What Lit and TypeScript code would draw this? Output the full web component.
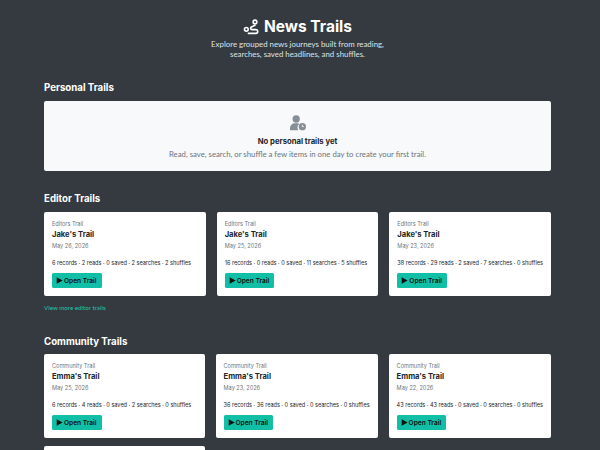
import { LitElement, css, html } from "lit";
import { customElement } from "lit/decorators.js";

const editorTrails = [
  { date: "May 26, 2026", stats: "6 records · 2 reads · 0 saved · 2 searches · 2 shuffles" },
  { date: "May 25, 2026", stats: "16 records · 0 reads · 0 saved · 11 searches · 5 shuffles" },
  { date: "May 23, 2026", stats: "38 records · 29 reads · 2 saved · 7 searches · 0 shuffles" },
];

const communityTrails = [
  { date: "May 25, 2026", stats: "6 records · 4 reads · 0 saved · 2 searches · 0 shuffles" },
  { date: "May 23, 2026", stats: "36 records · 36 reads · 0 saved · 0 searches · 0 shuffles" },
  { date: "May 22, 2026", stats: "43 records · 43 reads · 0 saved · 0 searches · 0 shuffles" },
  { date: "May 21, 2026", stats: "12 records · 12 reads · 0 saved · 0 searches · 0 shuffles" },
];

@customElement("app-root")
export class AppRoot extends LitElement {
  renderCard(kind: string, name: string, t: { date: string; stats: string }) {
    return html`
      <div class="card">
        <div class="kind">${kind}</div>
        <div class="name">${name}</div>
        <div class="date">${t.date}</div>
        <div class="stats">${t.stats}</div>
        <a class="open">
          <svg viewBox="0 0 10 10" width="7" height="7"><path d="M1 0.5 L9.5 5 L1 9.5 Z" fill="#111"></path></svg>
          Open Trail
        </a>
      </div>
    `;
  }

  render() {
    return html`
      <div class="page">
        <header>
          <h1>
            <svg viewBox="0 0 24 24" width="16" height="16" fill="none" stroke="#fff" stroke-width="2.4" stroke-linecap="round" stroke-linejoin="round">
              <circle cx="5" cy="15.5" r="2.8"></circle>
              <circle cx="18" cy="4.5" r="2.8"></circle>
              <path d="M18 9.5 L12.5 12 a2.2 2.2 0 0 0 0.8 4 h6 a2.4 2.4 0 0 1 0 5.5 H8"></path>
            </svg>
            News Trails
          </h1>
          <p>Explore grouped news journeys built from reading,<br />searches, saved headlines, and shuffles.</p>
        </header>

        <h2>Personal Trails</h2>
        <div class="empty">
          <svg viewBox="0 0 24 22" width="18" height="16">
            <circle cx="9.5" cy="5.5" r="5" fill="#868e96"></circle>
            <path d="M1 21 v-3 a6.5 6.5 0 0 1 6.5 -6.5 h4.5 a6 6 0 0 1 2 0.4 a6.5 6.5 0 0 0 -1.5 9.1 Z" fill="#868e96"></path>
            <circle cx="18" cy="16" r="5" fill="#868e96"></circle>
            <path d="M18 13.5 V16 H20" stroke="#f8f9fa" stroke-width="1.2" fill="none"></path>
          </svg>
          <div class="empty-title">No personal trails yet</div>
          <div class="empty-text">Read, save, search, or shuffle a few items in one day to create your first trail.</div>
        </div>

        <h2>Editor Trails</h2>
        <div class="grid">
          ${editorTrails.map((t) => this.renderCard("Editors Trail", "Jake's Trail", t))}
        </div>
        <a class="more">View more editor trails</a>

        <h2 class="community">Community Trails</h2>
        <div class="grid">
          ${communityTrails.map((t) => this.renderCard("Community Trail", "Emma's Trail", t))}
        </div>
      </div>
    `;
  }

  static styles = css`
    :host {
      display: block;
      background: #343a40;
      font-family: "Lato", sans-serif;
    }
    .page {
      padding: 16px 49px 24px 44px;
    }
    header {
      padding-bottom: 1px;
      text-align: center;
      color: #dee2e6;
    }
    h1 {
      margin: 0;
      display: flex;
      justify-content: center;
      align-items: center;
      gap: 5px;
      color: #fff;
      font-family: "Inter", sans-serif;
      font-size: 15.5px;
      font-weight: 700;
      line-height: 22px;
    }
    header p {
      margin: 1px 0 0;
      font-size: 7.85px;
      line-height: 10px;
    }
    h2 {
      margin: 21px 0 7px;
      color: #fff;
      font-family: "Inter", sans-serif;
      font-size: 9.7px;
      font-weight: 700;
      line-height: 13px;
    }
    h2.community {
      margin: 23px 0 6px;
    }
    .empty {
      height: 70px;
      box-sizing: border-box;
      padding-top: 14px;
      background: #f8f9fa;
      border-radius: 2px;
      text-align: center;
    }
    .empty svg {
      display: block;
      margin: 0 auto;
    }
    .empty-title {
      margin-top: 5px;
      color: #212529;
      font-family: "Inter", sans-serif;
      font-size: 7.7px;
      font-weight: 700;
      line-height: 11px;
    }
    .empty-text {
      margin-top: 2px;
      color: #6c757d;
      font-size: 7.77px;
      line-height: 11px;
    }
    .grid {
      display: grid;
      grid-template-columns: repeat(3, 1fr);
      gap: 8px 11px;
    }
    .card {
      height: 84px;
      box-sizing: border-box;
      padding: 8px;
      background: #fff;
      border-radius: 2px;
      color: #212529;
    }
    .kind {
      color: #6c757d;
      font-family: "Inter", sans-serif;
      font-size: 5.6px;
      line-height: 8px;
      white-space: nowrap;
    }
    .name {
      margin-top: 2px;
      font-family: "Inter", sans-serif;
      font-size: 7.6px;
      font-weight: 700;
      line-height: 10px;
    }
    .date {
      margin-top: 2px;
      color: #6c757d;
      font-family: "Inter", sans-serif;
      font-size: 5.6px;
      line-height: 8px;
    }
    .stats {
      margin-top: 9px;
      font-family: "Inter", sans-serif;
      font-size: 5.55px;
      line-height: 8px;
      white-space: nowrap;
    }
    .open {
      margin-top: 6px;
      display: inline-flex;
      align-items: center;
      gap: 1px;
      height: 15px;
      padding: 0 5px 0 4px;
      background: #10bfa6;
      border-radius: 1.5px;
      color: #111;
      font-family: "Inter", sans-serif;
      font-size: 6.6px;
      font-weight: 600;
    }
    .more {
      display: block;
      margin-top: 8px;
      color: #20c9a8;
      font-size: 6.2px;
      line-height: 8px;
    }
  `;
}
